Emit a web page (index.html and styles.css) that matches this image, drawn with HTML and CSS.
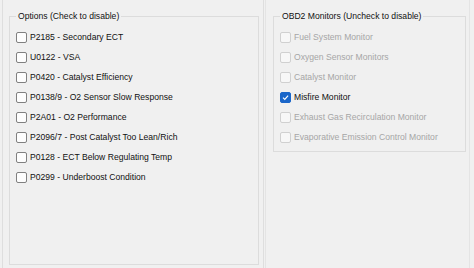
FILE: index.html
```html
<!DOCTYPE html>
<html lang="en">
<head>
    <meta charset="UTF-8">
    <title>Readiness Options</title>
    <link rel="stylesheet" href="styles.css">
</head>
<body>

<div class="window">
    <div class="pane pane-left">
        <fieldset class="group group-options">
            <legend>Options (Check to disable)</legend>
            <label class="row"><span class="box"></span>P2185 - Secondary ECT</label>
            <label class="row"><span class="box"></span>U0122 - VSA</label>
            <label class="row"><span class="box"></span>P0420 - Catalyst Efficiency</label>
            <label class="row"><span class="box"></span>P0138/9 - O2 Sensor Slow Response</label>
            <label class="row"><span class="box"></span>P2A01 - O2 Performance</label>
            <label class="row"><span class="box"></span>P2096/7 - Post Catalyst Too Lean/Rich</label>
            <label class="row"><span class="box"></span>P0128 - ECT Below Regulating Temp</label>
            <label class="row"><span class="box"></span>P0299 - Underboost Condition</label>
        </fieldset>
    </div>

    <div class="pane pane-right">
        <fieldset class="group group-monitors">
            <legend>OBD2 Monitors (Uncheck to disable)</legend>
            <label class="row disabled"><span class="box"></span>Fuel System Monitor</label>
            <label class="row disabled"><span class="box"></span>Oxygen Sensor Monitors</label>
            <label class="row disabled"><span class="box"></span>Catalyst Monitor</label>
            <label class="row"><span class="box checked"><svg viewBox="0 0 10 10" width="10" height="10"><path d="M2.2 5.2 L4.2 7.1 L7.9 3" fill="none" stroke="#fff" stroke-width="1.3"/></svg></span>Misfire Monitor</label>
            <label class="row disabled"><span class="box"></span>Exhaust Gas Recirculation Monitor</label>
            <label class="row disabled"><span class="box"></span>Evaporative Emission Control Monitor</label>
        </fieldset>
    </div>
</div>

</body>
</html>
```

FILE: styles.css
```css
body {
    margin: 0;
    background-color: #f0f0f0;
    font-family: "Liberation Sans", Arial, sans-serif;
    font-size: 8.6px;
    color: #111;
}
.window {
    display: flex;
    height: 268px;
    padding-left: 2px;
    box-sizing: border-box;
}
.pane {
    box-sizing: border-box;
    height: 268px;
    padding-top: 11px;
}
.pane-left {
    width: 262px;
    border-left: 1px solid #dedede;
    border-right: 1px solid #dedede;
    padding-left: 6px;
    padding-right: 4px;
    padding-bottom: 3px;
    display: flex;
}
.pane-right {
    width: 205px;
    margin-left: 1px;
    border-left: 1px solid #e4e4e4;
    border-right: 1px solid #e4e4e4;
    padding-left: 7px;
    padding-right: 3px;
}
.group {
    margin: 0;
    border: 1px solid #dcdcdc;
    padding: 0 6px 4px 6px;
    box-sizing: border-box;
}
.group legend {
    padding: 0 2px;
    line-height: 10px;
}
.group-options {
    flex: 1;
}
.group-monitors {
    height: 141px;
}
.row {
    display: flex;
    align-items: center;
    height: 20px;
    gap: 3px;
}
.group-options .row:first-of-type,
.group-monitors .row:first-of-type {
    margin-top: 6px;
}
.box {
    width: 9px;
    height: 9px;
    border: 1px solid #808080;
    border-radius: 2px;
    background-color: #fdfdfd;
    display: flex;
}
.disabled {
    color: #a6a6a6;
}
.disabled .box {
    border-color: #d0d0d0;
    background-color: #f7f7f7;
}
.box.checked {
    background-color: #1a66c9;
    border-color: #1a66c9;
    align-items: center;
    justify-content: center;
}
.box.checked svg {
    width: 9px;
    height: 9px;
}
```
